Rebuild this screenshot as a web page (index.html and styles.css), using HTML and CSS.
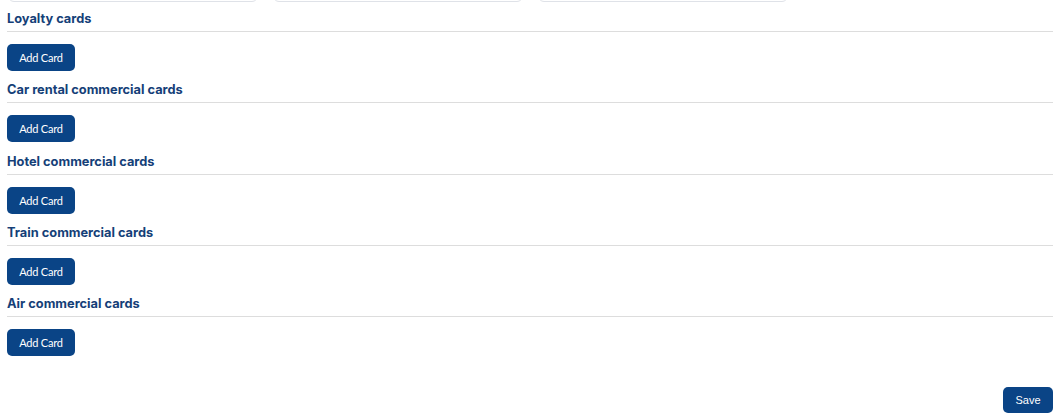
FILE: index.html
```html
<!DOCTYPE html>
<html lang="en">
<head>
<meta charset="utf-8">
<title>Cards</title>
<link rel="stylesheet" href="styles.css">
</head>
<body>
<div class="page">
  <div class="inputs">
    <div class="field"></div>
    <div class="field"></div>
    <div class="field"></div>
  </div>
  <section class="group">
    <h3 class="group-title">Loyalty cards</h3>
    <button class="btn">Add Card</button>
  </section>
  <section class="group">
    <h3 class="group-title">Car rental commercial cards</h3>
    <button class="btn">Add Card</button>
  </section>
  <section class="group">
    <h3 class="group-title">Hotel commercial cards</h3>
    <button class="btn">Add Card</button>
  </section>
  <section class="group">
    <h3 class="group-title">Train commercial cards</h3>
    <button class="btn">Add Card</button>
  </section>
  <section class="group">
    <h3 class="group-title">Air commercial cards</h3>
    <button class="btn">Add Card</button>
  </section>
  <div class="actions">
    <button class="btn btn-save">Save</button>
  </div>
</div>
</body>
</html>
```
FILE: styles.css
```css
html, body {
  margin: 0;
  padding: 0;
  background: #ffffff;
}
.page {
  padding: 0 7px;
  display: flex;
  flex-direction: column;
}
.inputs {
  display: flex;
  gap: 15px;
  margin-top: -34px;
  margin-bottom: 8px;
  padding-left: 1px;
}
.field {
  box-sizing: border-box;
  width: 250px;
  height: 36px;
  border: 1px solid #dfe2e8;
  border-radius: 6px;
}
.group {
  display: flex;
  flex-direction: column;
  align-items: flex-start;
  margin-bottom: 10.3px;
}
.group-title {
  margin: 0 0 12px 0;
  align-self: stretch;
  font-family: Inter, "Noto Sans", sans-serif;
  font-weight: 700;
  font-size: 12.8px;
  line-height: 16px;
  color: #153f78;
  padding-top: 1px;
  padding-bottom: 4px;
  border-bottom: 1px solid #dddddd;
}
.btn {
  height: 27px;
  width: 68px;
  padding: 0;
  border: none;
  border-radius: 5px;
  background: #0a4486;
  color: #ffffff;
  font-family: Lato, "Liberation Sans", sans-serif;
  font-size: 11px;
  letter-spacing: -0.2px;
  cursor: pointer;
}
.actions {
  display: flex;
  justify-content: flex-end;
  margin-top: 21px;
}
.btn-save {
  width: 50px;
  height: 26px;
  font-family: "Liberation Sans", Arial, sans-serif;
  font-size: 11px;
  letter-spacing: 0;
}
```
